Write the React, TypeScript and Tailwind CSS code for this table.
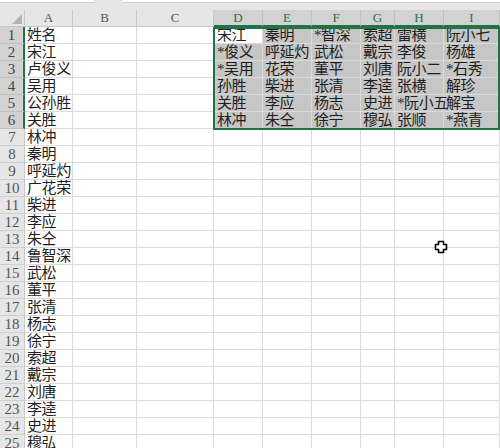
import React from "react";

const colWidths = [48, 64, 77, 49, 49, 49, 34, 49, 56];
const colNames = ["A", "B", "C", "D", "E", "F", "G", "H", "I"];

const colA = [
  "姓名", "宋江", "卢俊义", "吴用", "公孙胜", "关胜", "林冲", "秦明", "呼延灼", "广花荣",
  "柴进", "李应", "朱仝", "鲁智深", "武松", "董平", "张清", "杨志", "徐宁", "索超",
  "戴宗", "刘唐", "李逵", "史进", "穆弘",
];

const block = [
  ["宋江", "秦明", "*智深", "索超", "雷横", "阮小七"],
  ["*俊义", "呼延灼", "武松", "戴宗", "李俊", "杨雄"],
  ["*吴用", "花荣", "董平", "刘唐", "阮小二", "*石秀"],
  ["孙胜", "柴进", "张清", "李逵", "张横", "解珍"],
  ["关胜", "李应", "杨志", "史进", "*阮小五", "解宝"],
  ["林冲", "朱仝", "徐宁", "穆弘", "张顺", "*燕青"],
];

const cjk = { fontFamily: '"Liberation Serif", "Noto Sans CJK SC", serif' };

function Cell({ r, c }: { r: number; c: number }) {
  let text = "";
  if (c === 0) text = colA[r] ?? "";
  const inSel = r < 6 && c >= 3;
  if (inSel) text = block[r][c - 3];
  const active = r === 0 && c === 3;
  return (
    <div
      className={`relative h-[17px] border-r border-b border-[#dadada] ${
        inSel && !active ? "bg-[#c6c6c6]" : "bg-white"
      }`}
      style={{ width: colWidths[c] }}
    >
      <span
        className={`absolute z-10 top-[-1px] whitespace-nowrap text-[15px] leading-[18px] tracking-[-0.4px] text-[#1e1e1e] ${
          c === 3 ? "left-[3px]" : "left-[2px]"
        }`}
        style={cjk}
      >
        {text}
      </span>
    </div>
  );
}

export default function App() {
  return (
    <div className="relative w-[500px] h-[448px] overflow-hidden bg-white select-none">
      {/* formula bar remnant */}
      <div className="h-[10px] bg-[#e6e6e6] flex">
        <div className="w-[95px] h-[3px] bg-white border-r border-b border-[#cfcfcf]" />
        <div className="w-[28px]" />
        <div className="flex-1 h-[3px] bg-white border-b border-[#cfcfcf]" />
      </div>

      {/* column headers */}
      <div className="flex h-[17px]">
        <div className="relative w-[25px] h-[17px] bg-[#e6e6e6] border-r border-b border-[#c8c8c8]">
          <div className="absolute right-[2px] bottom-[2px] w-0 h-0 border-l-[10px] border-l-transparent border-b-[10px] border-b-[#b4b4b4]" />
        </div>
        {colNames.map((n, i) => {
          const sel = i >= 3;
          return (
            <div
              key={n}
              className={`h-[17px] flex items-center justify-center border-r text-[13px] ${
                sel
                  ? "bg-[#d2d2d2] text-[#217346] border-[#c0c0c0] border-b-2 border-b-[#217346]"
                  : "bg-[#e6e6e6] text-[#555] border-[#c8c8c8] border-b border-b-[#c8c8c8]"
              }`}
              style={{ width: colWidths[i], fontFamily: '"Liberation Serif", serif' }}
            >
              {n}
            </div>
          );
        })}
      </div>

      {/* rows */}
      {colA.map((_, r) => {
        const sel = r < 6;
        return (
          <div key={r} className="flex">
            <div
              className={`w-[25px] h-[17px] flex items-center justify-center border-b text-[15px] ${
                sel
                  ? "bg-[#d2d2d2] text-[#444] border-[#c0c0c0] border-r-2 border-r-[#217346]"
                  : "bg-[#e6e6e6] text-[#555] border-[#cfcfcf] border-r border-r-[#c8c8c8]"
              }`}
              style={{ fontFamily: '"Liberation Serif", serif' }}
            >
              {r + 1}
            </div>
            {colNames.map((_, c) => (
              <Cell key={c} r={r} c={c} />
            ))}
          </div>
        );
      })}

      {/* selection border */}
      <div className="absolute z-20 left-[213px] top-[27px] w-[287px] h-[103px] border-2 border-[#217346] pointer-events-none" />

      {/* cursor */}
      <svg className="absolute z-20 left-[434px] top-[240px]" width="15" height="15" viewBox="0 0 15 15">
        <path d="M4.5 1.5h5v3h3v5h-3v3h-5v-3h-3v-5h3z" fill="#fff" stroke="#000" strokeWidth="1.6" strokeLinejoin="round" />
      </svg>
    </div>
  );
}
